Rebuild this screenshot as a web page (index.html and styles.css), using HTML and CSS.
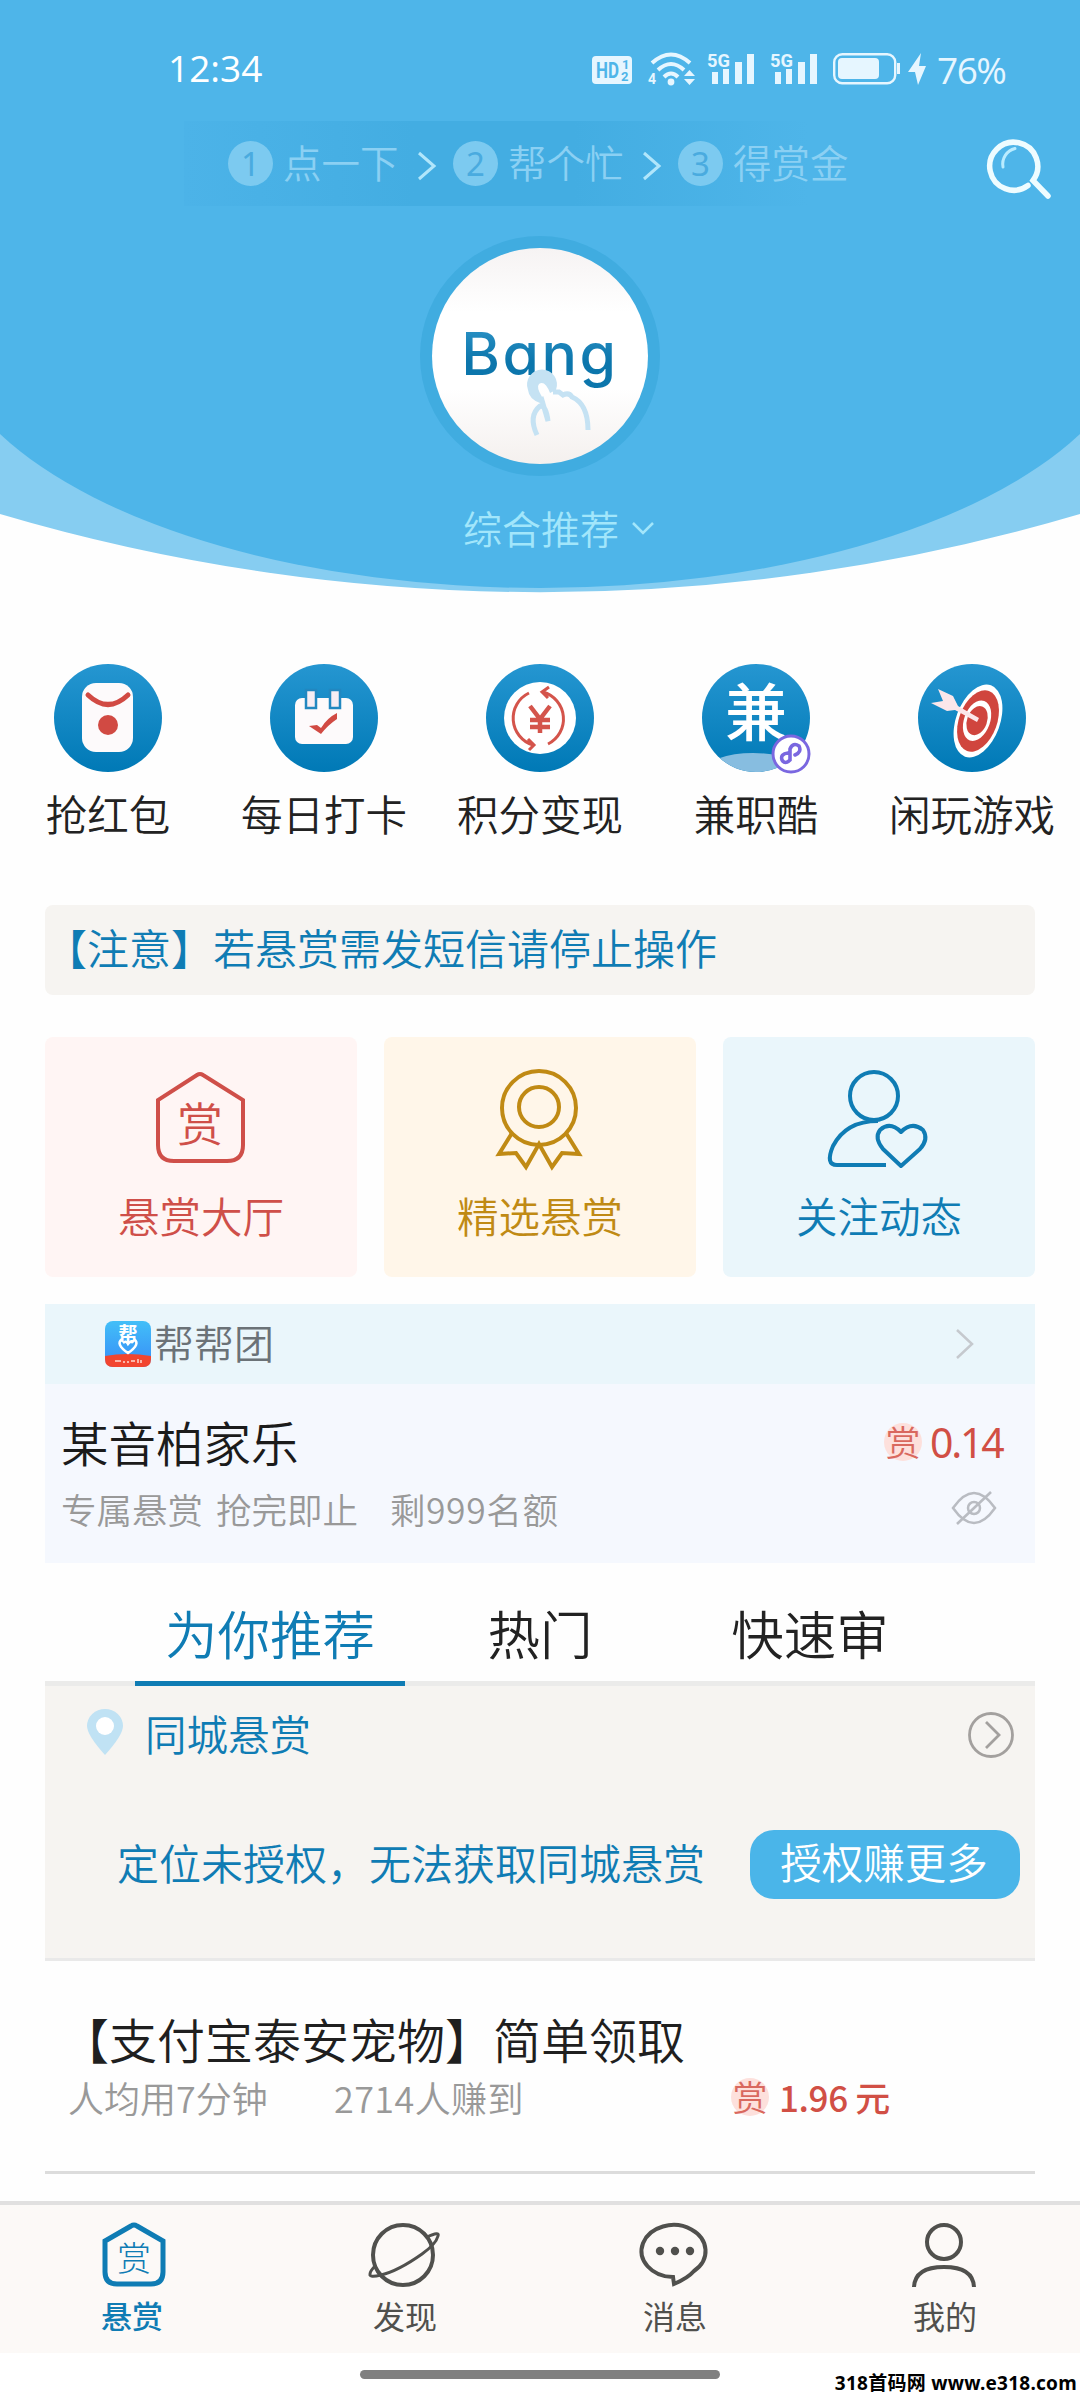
FILE: index.html
```html
<!DOCTYPE html>
<html lang="zh-CN">
<head>
<meta charset="utf-8">
<title>悬赏</title>
<link rel="stylesheet" href="styles.css">
</head>
<body>
<svg class="defs" width="0" height="0" aria-hidden="true">
  <defs>
    <linearGradient id="disc" x1="0" y1="0" x2="0" y2="1">
      <stop offset="0" stop-color="#2596d1"/><stop offset="1" stop-color="#0079b6"/>
    </linearGradient>
    <linearGradient id="app" x1="0" y1="0" x2="0" y2="1">
      <stop offset="0" stop-color="#42bff8"/><stop offset="1" stop-color="#388cf7"/>
    </linearGradient>
  </defs>
</svg>
<div class="phone">
  <header class="hero">
    <svg class="hero-bg" viewBox="0 0 1080 594" width="1080" height="594">
      <path d="M0 0H1080V514A1905 1905 0 0 1 0 514Z" fill="#86cdf1"/>
      <path d="M0 0H1080V434A600 273 0 0 1 0 434Z" fill="#4eb5e9"/>
    </svg>

    <div class="status">
      <span class="clock">12:34</span>
      <svg class="status-icons" viewBox="0 0 336 36" width="336" height="36" fill="#e6f6ff">
        <rect x="2" y="6" width="40" height="28" rx="4"/>
        <g fill="#4eb5e9" font-family="Roboto, sans-serif" font-weight="700">
          <text x="6" y="28" font-size="22" textLength="23" lengthAdjust="spacingAndGlyphs">HD</text>
          <text x="32" y="19" font-size="13">1</text>
          <text x="31" y="31" font-size="13">2</text>
        </g>
        <g fill="none" stroke="#e6f6ff" stroke-width="4">
          <path d="M62 13Q81 -4 100 13"/><path d="M68 20Q81 8 94 20"/><path d="M74 27Q81 20 88 27"/>
        </g>
        <circle cx="81" cy="32" r="3.4"/>
        <text x="58" y="34" font-size="14" font-weight="700" font-family="Roboto, sans-serif">4</text>
        <path d="M94 26L99.500 20L105 26ZM94 29L99.500 35L105 29Z"/>
        <g id="sig">
          <text x="117" y="17" font-size="19" font-weight="700" font-family="Roboto, sans-serif" textLength="23" lengthAdjust="spacingAndGlyphs">5G</text>
          <rect x="122" y="22" width="6" height="12"/><rect x="133" y="19" width="6" height="15"/>
          <rect x="145" y="12" width="7" height="22"/><rect x="157" y="4" width="7" height="30"/>
        </g>
        <use href="#sig" x="63"/>
        <rect x="244.200" y="4.200" width="61" height="29" rx="8" fill="none" stroke="#e6f6ff" stroke-width="2.400"/>
        <rect x="248" y="8" width="41" height="21" rx="4"/><rect x="307" y="13" width="3" height="11"/>
        <path d="M331 3L318 22H325L328 35L336 16H329Z"/>
      </svg>
      <span class="percent">76%</span>
    </div>

    <div class="guide">
      <div class="steps">
        <b>1</b><span>点一下</span>
        <svg viewBox="0 0 20 30" width="20" height="30"><path d="M2 2L17 15L2 28"/></svg>
        <b>2</b><span>帮个忙</span>
        <svg viewBox="0 0 20 30" width="20" height="30"><path d="M2 2L17 15L2 28"/></svg>
        <b>3</b><span>得赏金</span>
      </div>
      <svg class="search" viewBox="0 0 66 66" width="66" height="66" fill="none" stroke="#eefcff" stroke-width="5.500" stroke-linecap="round">
        <path d="M42 51.500A24 24 0 1 1 47 46.500L62 62"/>
        <path d="M17 33A16 16 0 0 1 29 14.500" stroke-width="3" stroke="#b9ecff"/>
      </svg>
    </div>

    <div class="logo">
      <div class="logo-disc"><span>Bang</span>
        <svg class="hand" viewBox="0 0 70 68" width="70" height="68" fill="none" stroke="#c5e2f3" stroke-width="5">
          <path d="M4 18A15 15 0 1 1 32 18L26 21Q21 8 15 12Q12 15 18 25L16 31Q5 27 4 18Z" fill="#c5e2f3" stroke="none"/>
          <path d="M29 20L35 20L39 23Q45 20 48 25Q64 32 64 58"/>
          <path d="M17 25L24 49Q22 33 16 34Q4 44 13 63"/>
        </svg>
      </div>
    </div>

    <div class="filter">综合推荐
      <svg viewBox="0 0 24 14" width="24" height="14"><path d="M2 2L12 12L22 2" fill="none" stroke="#a2e6fb" stroke-width="2.500"/></svg>
    </div>
  </header>

  <nav class="shortcuts">
    <a><svg viewBox="0 0 110 110" width="110" height="110">
      <circle cx="55" cy="55" r="54" fill="url(#disc)"/>
      <rect x="29" y="20" width="51" height="69" rx="14" fill="#fdfafb"/>
      <path d="M35 32Q55 51 75 32" fill="none" stroke="#d14a43" stroke-width="5" stroke-linecap="round"/>
      <circle cx="55" cy="62" r="10" fill="#d14a43"/></svg>抢红包</a>
    <a><svg viewBox="0 0 110 110" width="110" height="110">
      <circle cx="55" cy="55" r="54" fill="url(#disc)"/>
      <rect x="26" y="35" width="58" height="46" rx="7" fill="#fdfafb"/>
      <path d="M37 27H47V45H37ZM61 27H71V45H61Z" fill="#f7edf3" stroke="#2287c0" stroke-width="2.500"/>
      <path d="M40 63L48 62L52 65Q58 55 68 50V56Q59 62 52 71Z" fill="#d14a43"/></svg>每日打卡</a>
    <a><svg viewBox="0 0 110 110" width="110" height="110">
      <circle cx="55" cy="55" r="54" fill="url(#disc)"/>
      <circle cx="55" cy="55" r="36" fill="#fff"/>
      <g fill="none" stroke="#d4544b" stroke-width="3">
        <path d="M44 30A28 28 0 0 0 48 82M43 76L49 82L44 87"/>
        <path d="M63 81A28 28 0 0 0 58 29M64 24L57 29L63 35"/>
        <path d="M45 43L55 56L65 43M55 56V70M45 57H65M45 64H65" stroke-width="4.500"/>
      </g></svg>积分变现</a>
    <a><svg viewBox="0 0 110 110" width="110" height="110">
      <clipPath id="round"><circle cx="55" cy="55" r="54"/></clipPath>
      <circle cx="55" cy="55" r="54" fill="url(#disc)"/>
      <ellipse cx="52" cy="108" rx="48" ry="18" fill="#87bde0" clip-path="url(#round)"/>
      <text x="55" y="73" font-size="62" text-anchor="middle" fill="#fff" font-weight="500" class="sans">兼</text>
      <circle cx="90" cy="91" r="18" fill="#fff" stroke="#7a67e0" stroke-width="3"/>
      <path d="M87 90Q79 91 81 97Q84 102 89 97V86Q92 79 98 83Q101 89 94 92" fill="none" stroke="#7a67e0" stroke-width="3.600" stroke-linecap="round"/></svg>兼职酷</a>
    <a><svg viewBox="0 0 110 110" width="110" height="110">
      <circle cx="55" cy="55" r="54" fill="url(#disc)"/>
      <g transform="rotate(20 61 58)">
        <ellipse cx="61" cy="58" rx="22" ry="38" fill="#fff"/>
        <ellipse cx="61" cy="58" rx="19" ry="32" fill="#d0453e"/>
        <ellipse cx="60" cy="58" rx="13" ry="21" fill="#fff"/>
        <ellipse cx="60" cy="58" rx="10" ry="15" fill="#d0453e"/>
      </g>
      <path d="M21 26L36 33L41 43L62 55L60 59L38 47L30 48L14 40L26 38Z" fill="#fbe6ea"/></svg>闲玩游戏</a>
  </nav>

  <main>
    <div class="notice">【注意】若悬赏需发短信请停止操作</div>

    <div class="cards">
      <a class="card red"><svg viewBox="0 0 100 100" width="100" height="100" fill="none" stroke="currentColor" stroke-width="4">
        <path d="M46 6Q49 4 52 6L92 31V76Q92 92 76 92H23Q7 92 7 76V31Z"/>
        <text x="49" y="72" font-size="46" text-anchor="middle" fill="currentColor" stroke="none" class="sans">赏</text></svg>悬赏大厅</a>
      <a class="card gold"><svg viewBox="0 0 100 100" width="100" height="100" fill="none" stroke="currentColor" stroke-width="4">
        <circle cx="49" cy="39" r="37"/><circle cx="49" cy="38" r="20"/>
        <path d="M22 64L9 85L26 84L36 98L49 75L62 98L72 84L89 85L76 64"/></svg>精选悬赏</a>
      <a class="card blue"><svg viewBox="0 0 100 100" width="100" height="100" fill="none" stroke="currentColor" stroke-width="4" stroke-linejoin="round">
        <circle cx="45" cy="27" r="24"/><path d="M49 52Q17 52 4 77Q-4 96 8 96H57"/>
        <path d="M72 97L54 80Q45 69 51 61Q61 52 72 63Q83 52 94 61Q100 70 91 80Z"/></svg>关注动态</a>
    </div>

    <section class="group">
      <div class="group-head">
        <svg viewBox="0 0 46 46" width="46" height="46">
          <rect width="46" height="46" rx="8" fill="url(#app)"/>
          <path d="M0 35Q22 31 46 35V38Q46 46 38 46H8Q0 46 0 38Z" fill="#f2452f"/>
          <text x="23" y="20" font-size="19" font-weight="700" text-anchor="middle" fill="#fff" class="sans">帮</text>
          <path d="M17 18Q10 23 23 32Q36 23 29 18M18 22Q21 19 23 23Q26 19 28 22" fill="none" stroke="#fff" stroke-width="2.500"/>
          <path d="M10 40H16M18 41H20M22 41H24M26 40H30M33 38V42M36 39V42" stroke="#ffd9cf" stroke-width="1.500"/>
        </svg>
        <span>帮帮团</span>
        <svg class="more" viewBox="0 0 20 32" width="20" height="32"><path d="M2 2L17 16L2 30" fill="none" stroke="#c5c9ce" stroke-width="2.500"/></svg>
      </div>
      <div class="group-body">
        <div class="row"><h2>某音柏家乐</h2><div class="price"><i>赏</i><strong>0.14</strong></div></div>
        <div class="row sub"><p>专属悬赏 抢完即止<span>剩999名额</span></p>
          <svg viewBox="0 0 46 36" width="46" height="36" fill="none" stroke="#b9bcc2" stroke-width="2.500">
            <path d="M2 18Q23 -12 44 18Q23 48 2 18Z"/><circle cx="23" cy="18" r="6"/><path d="M40 2L6 34"/></svg></div>
      </div>
    </section>

    <nav class="tabs"><a class="on">为你推荐</a><a>热门</a><a>快速审</a></nav>

    <section class="local">
      <div class="local-head">
        <svg viewBox="0 0 38 48" width="38" height="48"><path d="M19 47Q1 27 1 18A18 17 0 0 1 37 18Q37 27 19 47Z" fill="#c0e2f4"/><circle cx="19" cy="18" r="9" fill="#fff"/></svg>
        <span>同城悬赏</span>
        <svg class="more" viewBox="0 0 46 46" width="46" height="46" fill="none" stroke="#a3a09e" stroke-width="2.800"><circle cx="23" cy="23" r="21.500"/><path d="M18 10L31 23L18 36"/></svg>
      </div>
      <div class="local-body"><span>定位未授权，无法获取同城悬赏</span><button>授权赚更多</button></div>
    </section>

    <article class="task">
      <h2>【支付宝泰安宠物】简单领取</h2>
      <div class="meta"><span class="time">人均用7分钟</span><span class="earned">2714人赚到</span><i>赏</i><strong>1.96 元</strong></div>
    </article>
  </main>

  <nav class="tabbar">
    <a class="on"><svg viewBox="0 0 72 66" width="72" height="66" fill="none" stroke="currentColor" stroke-width="5">
      <path d="M32 4Q35 2 38 4L64 19V50Q64 62 52 62H18Q6 62 6 50V19Z"/>
      <text x="35" y="49" font-size="34" text-anchor="middle" fill="currentColor" stroke="none" font-weight="300" class="sans">赏</text></svg><span>悬赏</span></a>
    <a><svg viewBox="0 0 72 66" width="72" height="66" fill="none" stroke="currentColor" stroke-width="4">
      <circle cx="34" cy="33" r="30"/>
      <path d="M58 15Q71 9 69 14Q67 22 53 32Q29 49 12 53Q0 56 1 52Q1 49 7 43" stroke-width="3"/></svg>发现</a>
    <a><svg viewBox="0 0 72 66" width="72" height="66" fill="none" stroke="currentColor" stroke-width="4">
      <path d="M35 62L34 55A32 26 0 1 1 55 49Q49 56 35 62Z"/>
      <g fill="currentColor" stroke="none"><circle cx="21" cy="29" r="4.200"/><circle cx="36" cy="29" r="4.200"/><circle cx="51" cy="29" r="4.200"/></g></svg>消息</a>
    <a><svg viewBox="0 0 72 66" width="72" height="66" fill="none" stroke="currentColor" stroke-width="4">
      <circle cx="35" cy="20" r="17"/><path d="M5 65Q6 45 35 45Q64 45 65 65"/></svg>我的</a>
  </nav>
  <footer class="gesture"><div class="pill"></div><div class="watermark">318首码网 www.e318.com</div></footer>
</div>
</body>
</html>
```
FILE: styles.css
```css
* { box-sizing: border-box; }
body { margin: 0; background: #fff; }
.defs { display: block; position: absolute; }
.phone {
  width: 1080px;
  height: 2400px;
  display: flex;
  flex-direction: column;
  overflow: hidden;
  background: #fefefe;
  color: #222;
  font-family: "Noto Sans CJK SC", sans-serif;
  font-weight: 350;
}
.phone svg { display: block; flex: none; overflow: visible; }
.sans { font-family: "Noto Sans CJK SC", sans-serif; }
h2, p { margin: 0; font-weight: inherit; }
i { font-style: normal; }

/* hero */
.hero { position: relative; height: 594px; flex: none; }
.hero-bg { position: absolute; left: 0; top: 0; }
.hero > :not(.hero-bg) { position: relative; }
.status {
  height: 101px;
  padding: 50px 74px 0 168px;
  display: flex;
  color: #e6f6ff;
  font-family: "Open Sans", sans-serif;
  font-size: 37px;
  font-weight: 400;
  line-height: 38px;
}
.clock { color: #fff; font-weight: 500; flex: 1; line-height: 36px; }
.percent { width: 69px; margin-left: 11px; line-height: 39px; letter-spacing: -1.5px; white-space: nowrap; }
.guide { height: 105px; padding: 20px 28px 0 184px; display: flex; }
.steps {
  width: 704px;
  height: 85px;
  padding-left: 44px;
  display: flex;
  align-items: center;
  background: linear-gradient(90deg, #4cb3e8 0, #43ade2 230px, #43ade2 390px, #4eb5e9 624px);
  color: #8bd0f3;
  font-size: 38.5px;
}
.steps b {
  width: 45px;
  height: 45px;
  border-radius: 50%;
  background: #7ccaf0;
  color: #4aabdf;
  font: 400 33px/45px "Noto Sans", sans-serif;
  text-align: center;
}
.steps span { width: 117px; margin-left: 10px; line-height: 40px; margin-top: -6px; }
.steps svg { margin: 4px 16px 0 17px; fill: none; stroke: #b0e6fb; stroke-width: 3; }
.search { margin-left: auto; margin-top: 13px; }
.logo {
  width: 240px;
  height: 240px;
  margin: 30px auto 0;
  padding: 12px;
  border-radius: 50%;
  background: #40ace0;
}
.logo-disc {
  position: relative;
  height: 216px;
  border-radius: 50%;
  background: linear-gradient(#f6f3f3, #fff 30%, #fff 65%, #f4f0ee);
  text-align: center;
}
.logo-disc span {
  display: block;
  padding-top: 61px;
  font: 500 59px/90px Inter, sans-serif;
  font-feature-settings: "cv11";
  letter-spacing: 2.5px;
  background: linear-gradient(#3ba0d2 40%, #0c76ac 75%);
  -webkit-background-clip: text;
  background-clip: text;
  color: transparent;
}
.hand { position: absolute; left: 92px; top: 124px; }
.filter {
  height: 60px;
  margin-top: 21px;
  padding-left: 463px;
  display: flex;
  align-items: center;
  gap: 12px;
  color: #a2e6fb;
  font-size: 39px;
  line-height: 58px;
}
.filter svg { margin-top: 2px; }

/* shortcuts */
.shortcuts { display: flex; height: 311px; padding-top: 69px; flex: none; }
.shortcuts a {
  width: 216px;
  display: flex;
  flex-direction: column;
  align-items: center;
  font-size: 41.5px;
  line-height: 60px;
  gap: 10px;
}

main { padding: 0 45px; height: 1296px; flex: none; }
.notice {
  height: 90px;
  border-radius: 8px;
  background: #f6f4f1;
  color: #0f7cb4;
  font-size: 42px;
  line-height: 83px;
}
.cards { display: flex; gap: 27px; margin-top: 42px; }
.card {
  flex: 1;
  height: 240px;
  padding-top: 32px;
  border-radius: 8px;
  display: flex;
  flex-direction: column;
  align-items: center;
  gap: 16px;
  font-size: 41.5px;
  line-height: 60px;
}
.red { background: #fff5f4; color: #cf4f49; }
.gold { background: #fff6e9; color: #c08a14; }
.blue { background: #eaf6fb; color: #0f7cb4; }

/* group card */
.group { margin-top: 27px; height: 259px; background: #f5f8fe; }
.group-head {
  height: 80px;
  padding: 0 60px;
  display: flex;
  align-items: center;
  background: #eaf6fb;
  color: #6b7277;
  font-size: 40px;
}
.group-head span { margin-left: 3px; line-height: 72px; margin-top: -4px; }
.more { margin-left: auto; }
.group-body { padding: 26px 30px 0 16px; }
.row { display: flex; justify-content: space-between; align-items: center; height: 64px; }
.row h2 { font-size: 47.5px; line-height: 60px; color: #1b1b1b; }
.price { display: flex; align-items: center; gap: 8px; }
.price strong {
  width: 75px;
  font: 400 41px/60px "Noto Sans", sans-serif;
  letter-spacing: -2.2px;
  color: #d14f45;
}
i {
  width: 38px;
  height: 38px;
  border-radius: 50%;
  background: #fde0dc;
  color: #d9685e;
  font-size: 35px;
  line-height: 36px;
  text-align: center;
}
.sub { height: 68px; padding-right: 8px; }
.sub p { font-size: 35.5px; color: #999; word-spacing: 5px; }
.sub p span { margin-left: 32px; letter-spacing: .6px; }

/* tabs */
.tabs { height: 123px; padding: 0 90px; display: flex; border-bottom: 5px solid #ebebea; }
.tabs a {
  width: 270px;
  height: 123px;
  text-align: center;
  font-size: 52.5px;
  line-height: 138px;
}
.tabs .on { color: #0f7cb4; border-bottom: 5px solid #0f7cb4; }

.local { height: 275px; background: #f6f4f1; border-bottom: 3px solid #e9e9e9; color: #0f7cb4; }
.local-head { height: 98px; padding: 0 21px 0 41px; display: flex; align-items: center; font-size: 41.5px; }
.local-head span { margin-left: 21px; line-height: 94px; margin-top: -4px; }
.local-head svg:first-child { margin-top: -6px; }
.local-body { height: 160px; padding: 0 15px 0 72px; display: flex; justify-content: space-between; align-items: center; font-size: 42px; line-height: 152px; white-space: nowrap; }
.local-body span { margin-top: -4px; }
.local button {
  width: 270px;
  height: 69px;
  padding: 0 2px 6px 0;
  border: 0;
  border-radius: 24px;
  background: #4ab5e9;
  color: #fff;
  font: inherit;
  font-size: 41.5px;
  line-height: 63px;
}

.task { height: 213px; padding: 44px 0 0 16px; border-bottom: 3px solid #dcdcdc; }
.task h2 { font-size: 48px; line-height: 66px; color: #1f1f1f; }
.meta { display: flex; align-items: center; height: 52px; font-size: 36px; color: #999; line-height: 48px; }
.time { width: 265px; padding-left: 7px; }
.earned { width: 405px; padding-left: 8px; letter-spacing: .4px; }
.meta strong { margin-left: 10px; font-size: 35px; font-weight: 500; letter-spacing: -.4px; color: #d14f45; }

/* bottom bar */
.tabbar {
  height: 152px;
  padding-top: 17px;
  flex: none;
  display: flex;
  border-top: 4px solid #e1e0e0;
  background: #fcf9f7;
  color: #50504d;
}
.tabbar a {
  width: 270px;
  display: flex;
  flex-direction: column;
  align-items: center;
  gap: 5px;
  font-size: 32px;
  line-height: 44px;
  font-weight: 400;
}
.tabbar .on { color: #0f7cb4; font-weight: 500; }
.tabbar .on span { margin-right: 6px; font-size: 31px; }
.gesture { position: relative; height: 47px; padding-top: 17px; background: #fff; }
.pill { width: 360px; height: 9px; margin: 0 auto; border-radius: 5px; background: #808080; }
.watermark {
  position: absolute;
  right: 3px;
  bottom: 3px;
  color: #000;
  font: 700 19px/28px "Noto Sans", "Noto Sans CJK SC", sans-serif;
  letter-spacing: .25px;
  white-space: nowrap;
}
```
